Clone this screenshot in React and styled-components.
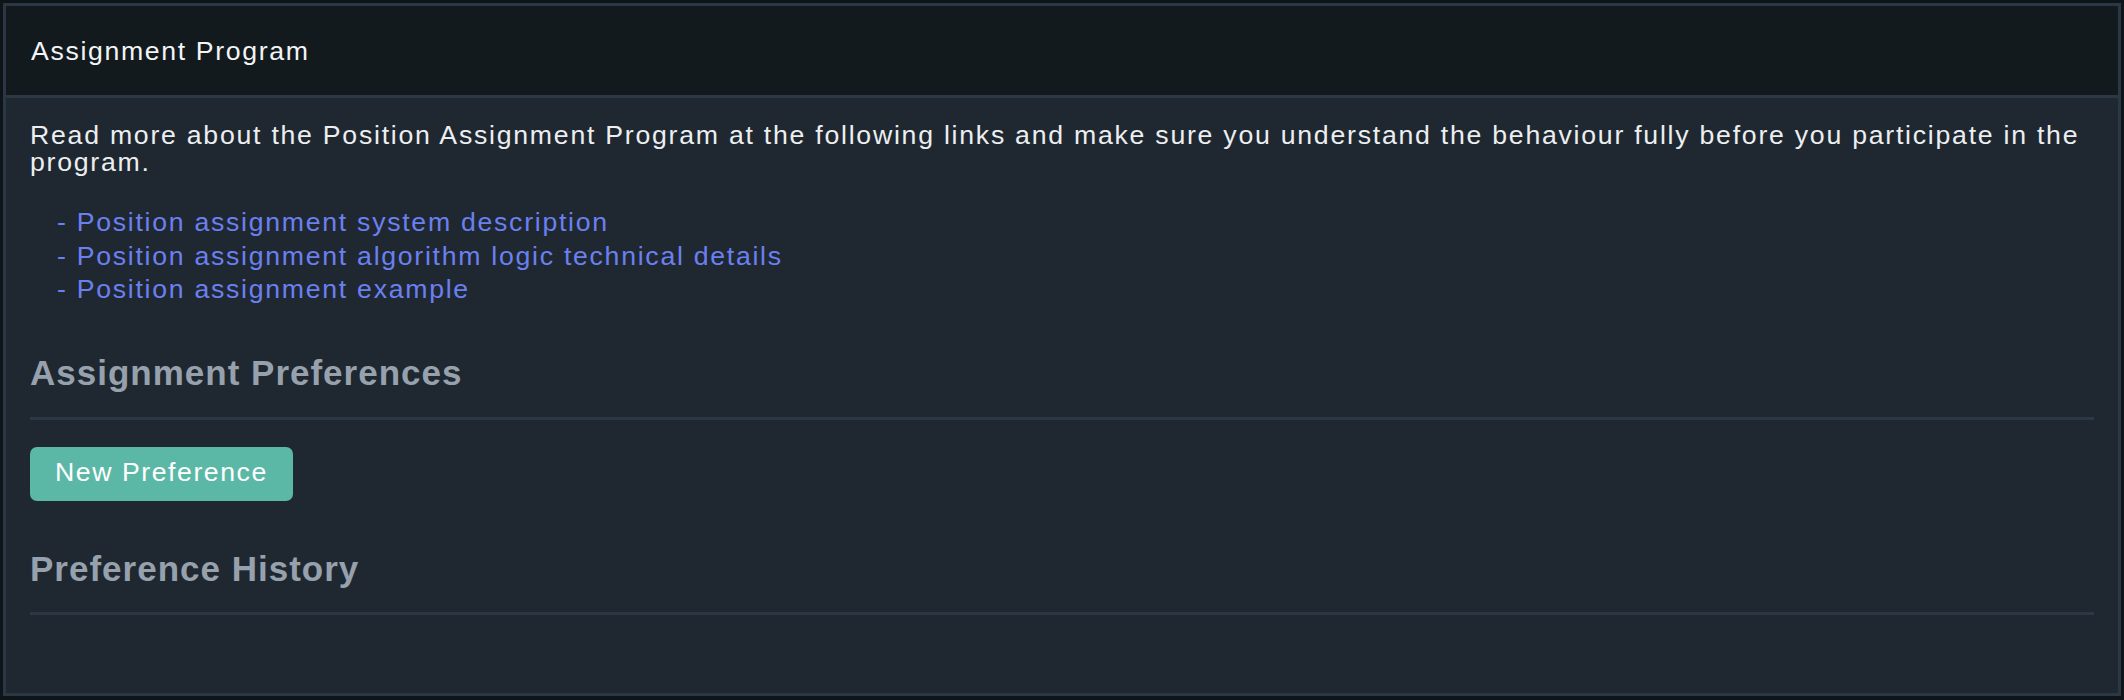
import React from 'react';
import styled, { createGlobalStyle } from 'styled-components';

const GlobalStyle = createGlobalStyle`
    html, body {
        margin: 0;
        padding: 0;
        background-color: #0f1418;
    }

    body {
        padding: 3px;
        box-sizing: border-box;
        height: 100vh;
        font-family: "Liberation Sans", Arial, sans-serif;
    }
`;

const Panel = styled.section`
    box-sizing: border-box;
    height: calc(100vh - 7px);
    border: 3px solid #2a3846;
    background-color: #1f2830;
    display: flex;
    flex-direction: column;
`;

const PanelHeader = styled.header`
    box-sizing: border-box;
    height: 92px;
    flex-shrink: 0;
    display: flex;
    align-items: center;
    padding: 2px 25px 0;
    background-color: #131a1e;
    border-bottom: 3px solid #2a3846;
    color: #f2f4f5;
    font-size: 26.67px;
    letter-spacing: 1.65px;
`;

const PanelBody = styled.div`
    padding: 24px 24px;
    color: #eceef0;
`;

const Intro = styled.p`
    margin: 0;
    font-size: 26.67px;
    line-height: 26.67px;
    letter-spacing: 1.75px;
`;

const LinkList = styled.ul`
    list-style: none;
    margin: 31px 0 0;
    padding: 0 0 0 27px;
`;

const LinkItem = styled.li`
    font-size: 26.67px;
    line-height: 33.33px;
    letter-spacing: 1.72px;

    a {
        color: #6b80f0;
        text-decoration: none;
    }
`;

const SectionTitle = styled.h3`
    margin: ${({ $first }) => ($first ? '46px' : '47px')} 0 0;
    padding-bottom: ${({ $first }) => ($first ? '23px' : '22px')};
    border-bottom: 3px solid #2a3846;
    color: #96a1ad;
    font-size: 35px;
    line-height: 42px;
    font-weight: 700;
    letter-spacing: 1px;
`;

const PrimaryButton = styled.button`
    margin-top: 27px;
    height: 54px;
    padding: 0 25px 4px;
    border: none;
    border-radius: 7px;
    background-color: #5bb8a6;
    color: #ffffff;
    font-family: "Liberation Sans", Arial, sans-serif;
    font-size: 26.67px;
    letter-spacing: 1.55px;
    cursor: pointer;
`;

const links = [
    'Position assignment system description',
    'Position assignment algorithm logic technical details',
    'Position assignment example',
];

const App = () => {
    return (
        <>
            <GlobalStyle />
            <Panel>
                <PanelHeader>Assignment Program</PanelHeader>
                <PanelBody>
                    <Intro>
                        Read more about the Position Assignment Program at the following links and make sure you
                        understand the behaviour fully before you participate in the program.
                    </Intro>
                    <LinkList>
                        {links.map((label) => (
                            <LinkItem key={label}>
                                <a href="#">- {label}</a>
                            </LinkItem>
                        ))}
                    </LinkList>
                    <SectionTitle $first>Assignment Preferences</SectionTitle>
                    <PrimaryButton>New Preference</PrimaryButton>
                    <SectionTitle>Preference History</SectionTitle>
                </PanelBody>
            </Panel>
        </>
    );
};

export default App;
